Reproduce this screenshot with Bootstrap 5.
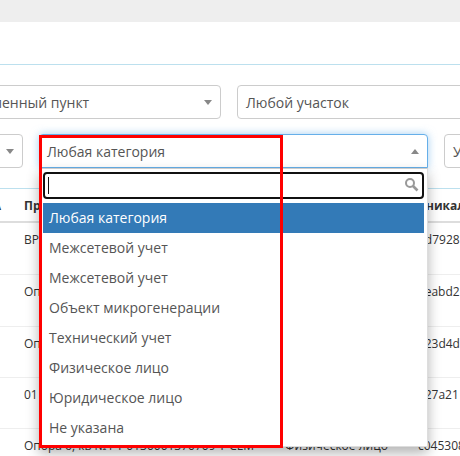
<!DOCTYPE html>
<html lang="ru">
<head>
<meta charset="utf-8">
<title>Фильтр</title>
<link href="https://cdn.jsdelivr.net/npm/bootstrap@5.3.0/dist/css/bootstrap.min.css" rel="stylesheet">
<style>
html,body{margin:0;height:456px;overflow:hidden;background:#fff}
body{font-family:"Open Sans","Noto Sans",sans-serif;font-size:14px;color:#333;line-height:20px}
.page{position:relative;width:460px;height:456px;overflow:hidden}
.topbar{height:22px;background:#eee}
.headsp{height:42px;border-bottom:1px solid #bce0ee;box-sizing:content-box}
.filters{padding-top:20px;display:flex;flex-direction:column;gap:15px}
.frow{display:flex;gap:16px}
.frow1{margin-left:-97px}
.frow2{margin-left:-283px}
.sel{height:34px;border:1px solid #ccc;border-radius:4px;color:#555;padding:7px 26px 6px 8px;position:relative;white-space:nowrap;overflow:hidden;flex:none;background:#fff}
.w318{width:318px}
.w306{width:306px}
.w389{width:389px}
.sel::after{content:"";position:absolute;right:8px;top:14px;border-left:4px solid transparent;border-right:4px solid transparent;border-top:5px solid #888}
.sel.open{border-color:#66afe9;box-shadow:0 0 8px rgba(102,175,233,.6);border-radius:4px 4px 0 0;overflow:visible;padding-left:7px}
.sel.open::after{border-top:0;border-bottom:5px solid #888}
.tbl{margin-top:20px;border-top:1px solid #bce0ee;margin-left:-2px;font-size:12px}
.throw,.tdrow{display:grid;grid-template-columns:26px 261px 133px 200px;white-space:nowrap;overflow:hidden}
.throw{height:34px;font-weight:700;padding-top:7px;border-bottom:2px solid #ddd}
.tdrow{border-bottom:1px solid #eee;padding-top:7px}
.h52{height:52px}
.h51{height:51px}
.numcell{display:flex;justify-content:flex-end;padding-right:23px}
.ddmenu{position:absolute;left:39px;top:168px;width:389px;height:279px;background:#fff;border:1px solid #ddd;border-top-color:#ccc;box-shadow:0 6px 12px rgba(0,0,0,.3);padding:3px 3px 0 3px}
.srch{height:27px;border:2px solid #111;border-radius:4px;position:relative;display:flex;align-items:center;padding-left:3px}
.caretbar{width:1px;height:17px;background:#111}
.srch svg{position:absolute;right:3px;top:3px}
.opts{margin:4px 0 0;padding:0;list-style:none}
.opts li{height:30px;line-height:30px;padding-left:6px;color:#555;font-size:14px}
.opts li.act{background:#337ab7;color:#fff}
.redbox{position:absolute;left:39px;top:135px;width:244px;height:313px;border:3px solid #f00;pointer-events:none}
</style>
</head>
<body>
<div class="page">
  <div class="topbar"></div>
  <div class="headsp"></div>
  <div class="filters">
    <div class="frow frow1">
      <div class="sel w318">Любой населенный пункт</div>
      <div class="sel w306">Любой участок</div>
    </div>
    <div class="frow frow2">
      <div class="sel w306">Любой тип</div>
      <div class="sel w389 open">Любая категория</div>
      <div class="sel w306">Участок</div>
    </div>
  </div>
  <div class="tbl">
    <div class="throw"><div class="numcell">А</div><div>Присоединение</div><div>Категория</div><div>Уникальный</div></div>
    <div class="tdrow h52"><div></div><div>ВРУ-0,4 кВ</div><div></div><div>3d7928</div></div>
    <div class="tdrow h52"><div></div><div>Опора 1</div><div></div><div>aeabd2</div></div>
    <div class="tdrow h51"><div></div><div>Опора 2</div><div></div><div>a23d4d</div></div>
    <div class="tdrow h51"><div></div><div>01</div><div></div><div>a27a21</div></div>
    <div class="tdrow h52"><div></div><div>Опора 6, кв №1 Т 0130001370709 Т-СЕМ</div><div>Физическое лицо</div><div>c045308</div></div>
  </div>
  <div class="ddmenu">
    <div class="srch"><span class="caretbar"></span>
      <svg width="15" height="15" viewBox="0 0 15 15" fill="none" stroke="#999" stroke-width="2"><circle cx="6" cy="6" r="4"/><path d="M9 9l4.5 4.5" stroke-width="2.6"/></svg>
    </div>
    <ul class="opts">
      <li class="act">Любая категория</li>
      <li>Межсетевой учет</li>
      <li>Межсетевой учет</li>
      <li>Объект микрогенерации</li>
      <li>Технический учет</li>
      <li>Физическое лицо</li>
      <li>Юридическое лицо</li>
      <li>Не указана</li>
    </ul>
  </div>
  <div class="redbox"></div>
</div>
<script src="https://cdn.jsdelivr.net/npm/bootstrap@5.3.0/dist/js/bootstrap.bundle.min.js"></script>
</body>
</html>
